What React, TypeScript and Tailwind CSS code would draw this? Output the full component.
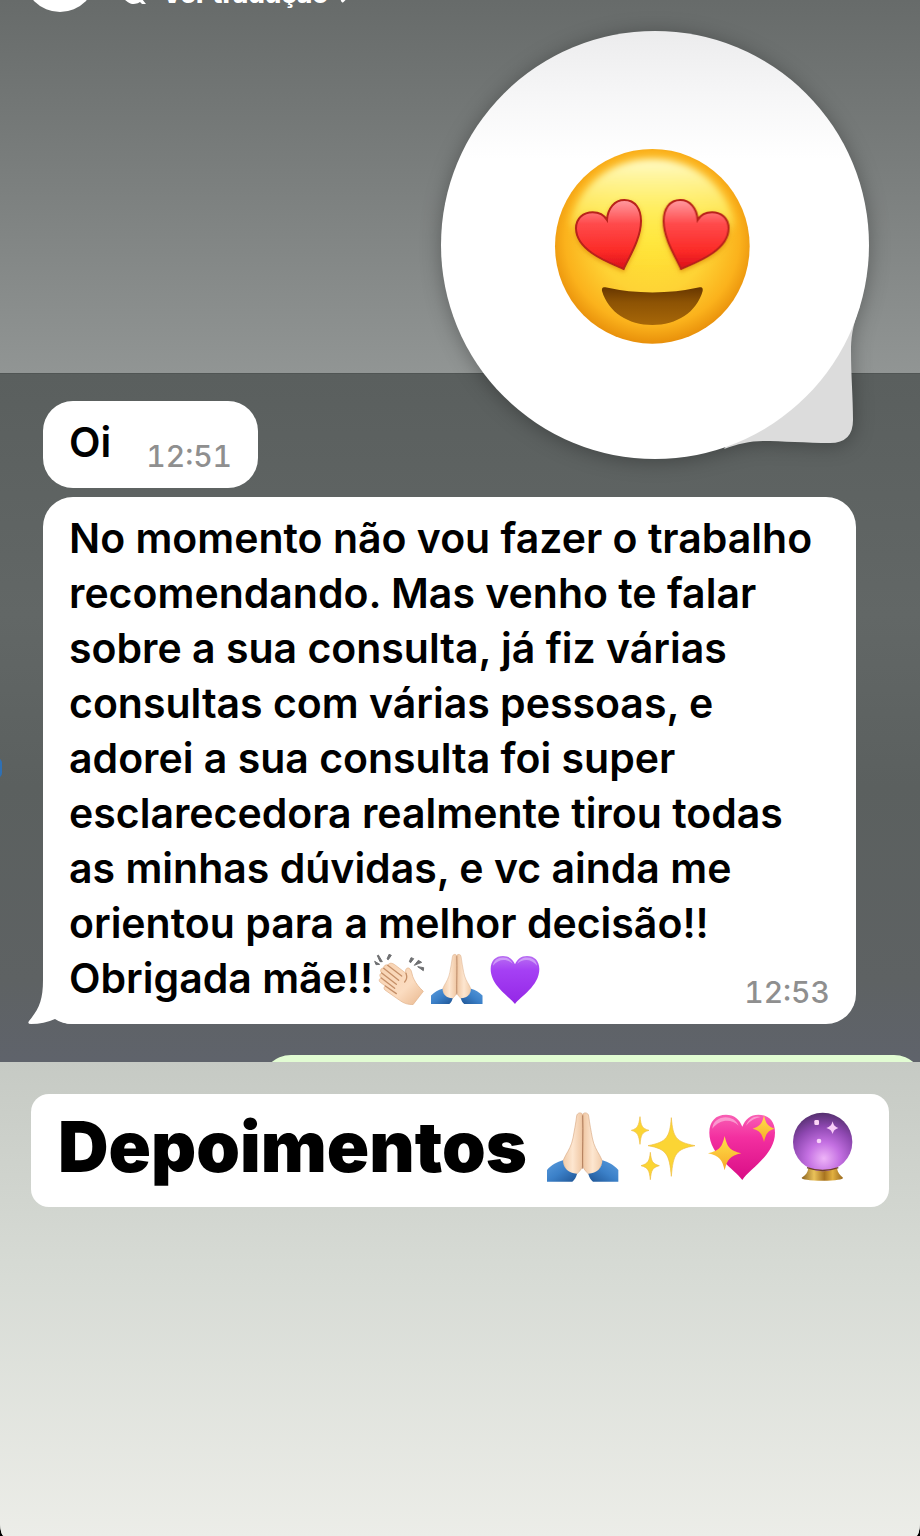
import { FaChevronRight } from "react-icons/fa";

const message = [
  "No momento não vou fazer o trabalho",
  "recomendando. Mas venho te falar",
  "sobre a sua consulta, já fiz várias",
  "consultas com várias pessoas, e",
  "adorei a sua consulta foi super",
  "esclarecedora realmente tirou todas",
  "as minhas dúvidas, e vc ainda me",
  "orientou para a melhor decisão!!",
];

function HeartEyes() {
  const heart =
    "M251 402 C222 388 108 352 108 280 C108 250 130 232 158 232 C178 232 192 240 201 255 C203 220 224 195 253 195 C286 195 303 222 303 258 C303 312 266 368 251 402Z";
  return (
    <svg x="98" y="104" width="225" height="225" viewBox="0 0 675 675">
      <defs>
        <radialGradient id="face" cx="0.5" cy="0.46" r="0.56">
          <stop offset="0" stopColor="#ffe536" />
          <stop offset="0.5" stopColor="#fed335" />
          <stop offset="0.8" stopColor="#fbb21c" />
          <stop offset="1" stopColor="#e48806" />
        </radialGradient>
        <linearGradient id="shine" x1="0" y1="0" x2="0" y2="1">
          <stop offset="0" stopColor="#fffbc8" />
          <stop offset="0.45" stopColor="#fff56e" stopOpacity="0.75" />
          <stop offset="1" stopColor="#ffe736" stopOpacity="0" />
        </linearGradient>
        <linearGradient id="eye" x1="0" y1="0" x2="0" y2="1">
          <stop offset="0" stopColor="#ff9aa0" />
          <stop offset="0.35" stopColor="#ff4a4b" />
          <stop offset="0.75" stopColor="#fb2a26" />
          <stop offset="1" stopColor="#d9101c" />
        </linearGradient>
        <linearGradient id="mouth" x1="0" y1="0" x2="0" y2="1">
          <stop offset="0" stopColor="#673600" />
          <stop offset="0.4" stopColor="#8d5304" />
          <stop offset="1" stopColor="#a76708" />
        </linearGradient>
        <filter id="eyeShadow" x="-20%" y="-20%" width="140%" height="140%">
          <feDropShadow dx="0" dy="6" stdDeviation="7" floodColor="#d97a00" floodOpacity="0.6" />
        </filter>
        <filter id="soft" x="-10%" y="-10%" width="120%" height="120%">
          <feGaussianBlur stdDeviation="11" />
        </filter>
      </defs>
      <circle cx="337" cy="334" r="292" fill="url(#face)" />
      <path
        d="M337 72 C470 72 560 160 582 260 C560 340 450 400 337 400 C224 400 114 340 92 260 C114 160 204 72 337 72Z"
        fill="url(#shine)"
        filter="url(#soft)"
      />
      <g fill="url(#eye)" stroke="#b8201a" strokeWidth="6" filter="url(#eyeShadow)">
        <path d={heart} />
        <path d={heart} transform="translate(674 0) scale(-1 1)" />
      </g>
      <path
        d="M196 457 Q337 488 479 457 Q490 454 488 468 C470 532 410 570 337 570 C265 570 205 532 186 468 Q184 454 196 457Z"
        fill="url(#mouth)"
      />
    </svg>
  );
}

function Reaction() {
  return (
    <svg
      viewBox="0 0 428 428"
      className="absolute top-[31px] right-[50px] z-10 size-[428px] overflow-visible drop-shadow-[0_2px_10px_rgba(0,0,0,0.3)]"
      role="img"
      aria-label="Reação: rosto com olhos de coração"
    >
      <defs>
        <linearGradient id="disc" x1="0" y1="0" x2="0" y2="1">
          <stop offset="0" stopColor="#ececed" />
          <stop offset="0.15" stopColor="#f6f6f7" />
          <stop offset="0.3" stopColor="#ffffff" />
        </linearGradient>
      </defs>
      <path
        d="M418 275 C410 295 409 309 409 320 C409 345 411 366 411 389 Q411 412 388 412 C365 412 340 410 321 410 C308 410 295 413 282 418 L340 340Z"
        fill="#dcdcdc"
      />
      <circle cx="213" cy="214" r="214" fill="url(#disc)" />
      <HeartEyes />
    </svg>
  );
}

function Pray({ className }: { className: string }) {
  const hand =
    "M130 42 C126 36 114 38 113 48 C110 72 106 92 102 114 C98 136 88 152 80 166 C76 174 73 180 71 186 L84 214 L110 226 C120 214 131 208 131 190Z";
  const cuff = "M24 210 C38 194 54 186 72 181 C72 204 88 220 114 221 C112 232 106 240 100 245 L24 245Z";
  return (
    <svg viewBox="24 33 216 216" className={className} role="img" aria-label="Mãos juntas">
      <defs>
        <linearGradient id="praySkin" x1="0" y1="0" x2="1" y2="0">
          <stop offset="0" stopColor="#f0cba9" />
          <stop offset="0.5" stopColor="#fde6d0" />
          <stop offset="1" stopColor="#efc6a2" />
        </linearGradient>
        <linearGradient id="cuff" x1="0" y1="0" x2="1" y2="1">
          <stop offset="0" stopColor="#5a9bdc" />
          <stop offset="0.5" stopColor="#3b80c8" />
          <stop offset="1" stopColor="#1f5595" />
        </linearGradient>
      </defs>
      <g>
        <path d={hand} fill="url(#praySkin)" stroke="#d9ab85" strokeWidth="2" />
        <path d={cuff} fill="url(#cuff)" />
      </g>
      <g transform="translate(262 0) scale(-1 1)">
        <path d={hand} fill="url(#praySkin)" stroke="#d9ab85" strokeWidth="2" />
        <path d={cuff} fill="url(#cuff)" />
      </g>
      <path d="M131 46 C133 100 130 150 131 206" fill="none" stroke="#b27d5b" strokeWidth="3" />
    </svg>
  );
}

function Clap({ className }: { className: string }) {
  return (
    <svg viewBox="48 34 156 156" className={className} role="img" aria-label="Palmas">
      <defs>
        <linearGradient id="clapSkin" x1="0" y1="0" x2="1" y2="1">
          <stop offset="0" stopColor="#f8d3b2" />
          <stop offset="0.6" stopColor="#fbdcc0" />
          <stop offset="1" stopColor="#e9b88f" />
        </linearGradient>
      </defs>
      <path
        d="M92 70 C98 62 106 64 113 69 L147 95 C143 84 149 76 157 80 C166 86 164 102 171 113 C178 127 186 137 199 149 L168 189 C152 189 140 185 128 176 L84 145 C79 141 81 135 85 133 L70 122 C64 117 67 110 73 109 C66 103 68 96 74 94 C67 86 73 78 80 79 C80 72 86 68 92 70Z"
        fill="url(#clapSkin)"
        stroke="#e1b088"
        strokeWidth="2"
      />
      <path
        d="M92 71 L134 103 M80 80 L125 116 M74 94 L118 128 M73 109 L113 140 M85 133 L118 156 M147 95 C151 106 150 114 143 121"
        fill="none"
        stroke="#c58f68"
        strokeWidth="4"
        strokeLinecap="round"
      />
      <path
        d="M53 59 L68 68 L57 69Z M64 40 L76 60 L69 60 L61 42Z M96 38 L103 41 L94 54 L90 52Z M162 48 L170 51 L161 63 L157 60Z M184 56 L194 62 L172 71Z M182 75 L200 78 L199 87Z"
        fill="#6f7072"
        stroke="#6f7072"
        strokeWidth="3"
      />
    </svg>
  );
}

function PurpleHeart({ className }: { className: string }) {
  return (
    <svg viewBox="396 34 156 156" className={className} role="img" aria-label="Coração roxo">
      <defs>
        <linearGradient id="purple" x1="0" y1="0" x2="0" y2="1">
          <stop offset="0" stopColor="#b86df2" />
          <stop offset="0.3" stopColor="#a540f4" />
          <stop offset="1" stopColor="#9427e6" />
        </linearGradient>
      </defs>
      <path
        d="M474 187 C458 165 401 133 401 82 C401 57 416 43 438 43 C456 43 468 53 474 68 C480 53 492 43 510 43 C532 43 547 57 547 82 C547 133 490 165 474 187Z"
        fill="url(#purple)"
      />
      <path d="M408 72 C410 44 455 38 467 66 C450 50 424 51 408 72Z M481 66 C493 38 538 44 540 72 C524 51 498 50 481 66Z" fill="#d9b2fa" opacity="0.7" />
    </svg>
  );
}

function Sparkles({ className }: { className: string }) {
  return (
    <svg viewBox="264 33 216 216" className={className} role="img" aria-label="Brilhos">
      <g fill="#fbd534" stroke="#efbd42" strokeWidth="2" strokeLinejoin="round">
        <path d="M397 53 C402 112 410 126 468 137 C410 147 403 162 397 229 C391 162 383 147 327 137 C384 126 392 112 397 53Z" />
        <path d="M303 50 C306 78 309 85 330 91 C309 97 306 104 303 133 C299 104 296 97 277 91 C296 85 299 78 303 50Z" />
        <path d="M334 157 C337 184 340 191 361 197 C340 203 337 210 334 239 C331 210 327 203 306 197 C327 191 331 184 334 157Z" />
      </g>
    </svg>
  );
}

function SparklingHeart({ className }: { className: string }) {
  return (
    <svg viewBox="54 33 216 216" className={className} role="img" aria-label="Coração brilhante">
      <defs>
        <linearGradient id="pink" x1="0" y1="0" x2="0" y2="1">
          <stop offset="0" stopColor="#f95fb4" />
          <stop offset="0.35" stopColor="#f32fa0" />
          <stop offset="1" stopColor="#d90d86" />
        </linearGradient>
        <linearGradient id="gold" x1="0" y1="0" x2="0" y2="1">
          <stop offset="0" stopColor="#ffe14a" />
          <stop offset="1" stopColor="#f7a928" />
        </linearGradient>
      </defs>
      <path
        d="M160 240 C137 207 61 165 61 98 C61 63 81 44 111 44 C135 44 152 58 160 80 C168 58 185 44 208 44 C239 44 258 63 258 98 C258 165 181 207 160 240Z"
        fill="url(#pink)"
      />
      <path d="M70 86 C72 46 133 38 149 77 C127 55 92 57 70 86Z M171 77 C180 52 200 46 215 51 C200 54 183 62 171 77Z" fill="#fbb0da" opacity="0.75" />
      <g fill="url(#gold)">
        <path d="M107 108 C115 142 122 151 157 160 C122 168 115 178 107 211 C99 178 92 168 57 160 C92 151 99 142 107 108Z" />
        <path d="M225 46 C231 72 236 79 257 86 C236 92 231 100 225 126 C219 100 213 92 191 86 C213 79 219 72 225 46Z" />
      </g>
    </svg>
  );
}

function CrystalBall({ className }: { className: string }) {
  return (
    <svg viewBox="294 33 216 216" className={className} role="img" aria-label="Bola de cristal">
      <defs>
        <radialGradient id="ball" cx="0.52" cy="0.78" r="0.78">
          <stop offset="0" stopColor="#eeb4f8" />
          <stop offset="0.35" stopColor="#c470e2" />
          <stop offset="0.7" stopColor="#8d47b0" />
          <stop offset="1" stopColor="#55306f" />
        </radialGradient>
        <linearGradient id="base" x1="0" y1="0" x2="1" y2="0">
          <stop offset="0" stopColor="#8a6220" />
          <stop offset="0.3" stopColor="#eac25a" />
          <stop offset="0.55" stopColor="#a87420" />
          <stop offset="0.75" stopColor="#e2b040" />
          <stop offset="1" stopColor="#9a6a20" />
        </linearGradient>
      </defs>
      <path d="M358 205 L444 205 C446 218 453 226 462 233 Q462 241 401 242 Q338 241 338 233 C350 226 356 218 358 205Z" fill="url(#base)" />
      <ellipse cx="401" cy="126" rx="89" ry="88" fill="url(#ball)" />
      <path d="M354 203 Q401 220 448 203" fill="none" stroke="#70402a" strokeWidth="4" />
      <rect x="376" y="60" width="14" height="15" rx="4" fill="#fbd5f6" />
      <circle cx="390" cy="123" r="7" fill="#f8d2f8" />
      <path d="M431 64 C434 77 438 80 448 84 C438 88 434 91 431 102 C427 91 423 88 412 84 C423 80 427 77 431 64Z" fill="#f8cdf8" />
    </svg>
  );
}

function Time({ children }: { children: string }) {
  return (
    <time className="-mb-1 block text-[30px] leading-9 font-medium text-[#8f8f8f] tabular-nums">
      {children}
    </time>
  );
}

export default function App() {
  return (
    <div className="bg-black font-['Inter',sans-serif]">
      <main className="relative flex min-h-screen flex-col overflow-hidden bg-[#dfe1dc] [border-radius:0_0_4px_4px/0_0_14px_14px]">
        <section className="h-[373px] bg-linear-to-b from-[#676b6a] to-[#919594]">
          {/* story header, scrolled mostly off the top */}
          <header className="-mt-[60px] flex items-end gap-[26px] pl-6 text-white">
            <div className="size-[72px] rounded-full bg-white" />
            <button className="flex items-center gap-4 text-[26px] leading-9 font-extrabold">
              <svg viewBox="0 0 24 24" className="size-6" fill="currentColor" aria-hidden="true">
                <path d="M11 0a11 11 0 1 0 7 20l2 2h4l-4-5A11 11 0 0 0 11 0z" />
              </svg>
              <span className="flex items-center gap-2">
                Ver tradução
                <FaChevronRight className="size-5" />
              </span>
            </button>
          </header>
        </section>

        <Reaction />

        <section className="relative overflow-hidden border-t border-[#505554] bg-[linear-gradient(to_bottom,#5a5f5e_0%,#626766_35%,#5b605f_60%,#5e6263_88%,#5f636b_100%)] pt-[27px]">
          <div className="absolute top-96 -left-2 h-5 w-[10px] rounded-full bg-[#2f70b4]" />
          <div className="flex flex-col items-start gap-[9px] pr-16 pl-[43px] text-[41px] leading-[55px] font-semibold text-black">
            <div className="flex items-end gap-[35px] rounded-[30px] bg-white px-[26px] pt-[14px] pb-[18px]">
              <p>Oi</p>
              <Time>12:51</Time>
            </div>
            <div className="relative w-full rounded-[30px] bg-white px-[26px] pt-[14px] pb-[18px]">
              <svg viewBox="0 0 45 44" className="absolute bottom-0 -left-[15px] h-11 w-[45px]" aria-hidden="true">
                <path d="M15 0 C15 20 11 29 1 41 Q-1 44 3 44 Q16 44 27 39 Q34 44 45 44 V0Z" fill="#fff" />
              </svg>
              <p>
                {message.map((line) => (
                  <span key={line} className="block whitespace-nowrap">
                    {line}
                  </span>
                ))}
              </p>
              <div className="relative flex items-center">
                <span className="whitespace-nowrap">Obrigada mãe!!</span>
                <span className="flex gap-[6px]">
                  <Clap className="size-[52px]" />
                  <Pray className="size-[52px]" />
                  <PurpleHeart className="size-[52px]" />
                </span>
                <div className="ml-auto self-end">
                  <Time>12:53</Time>
                </div>
              </div>
            </div>
          </div>
          {/* next sent message, only its top edge shows */}
          <div className="mt-[31px] -mr-1 ml-[261px] h-[7px] overflow-hidden">
            <div className="h-20 rounded-[30px] bg-[#e2fcd3]" />
          </div>
        </section>

        <section className="flex-1 bg-linear-to-b from-[#c6cac4] via-[#d7dbd5] via-45% to-[#ecede8] px-[31px] pt-8">
          <div className="flex items-center gap-5 rounded-[18px] bg-white px-[27px] pt-[17px] pb-6">
            <h1 className="text-[70px] leading-[72px] font-black text-black">Depoimentos</h1>
            <div className="flex gap-2">
              <Pray className="size-[72px]" />
              <Sparkles className="size-[72px]" />
              <SparklingHeart className="size-[72px]" />
              <CrystalBall className="size-[72px]" />
            </div>
          </div>
        </section>
      </main>
    </div>
  );
}
